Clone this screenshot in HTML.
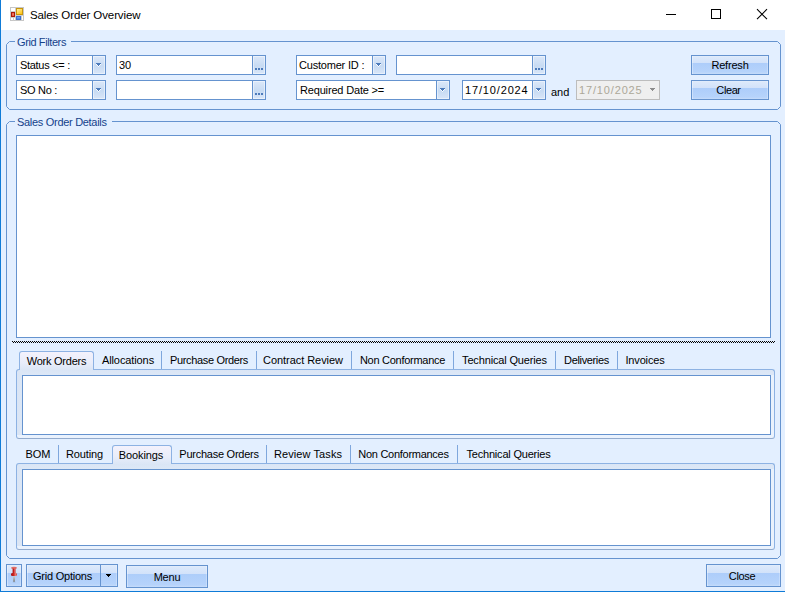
<!DOCTYPE html>
<html><head><meta charset="utf-8"><title>Sales Order Overview</title><style>
html,body{margin:0;padding:0;background:#E3EFFF;}
body{width:785px;height:592px;position:relative;overflow:hidden;font-family:"Liberation Sans",sans-serif;}
div,span.t,svg{position:absolute;box-sizing:border-box;}
span.t{font-size:11px;line-height:14px;white-space:pre;color:#000;}
span.c{text-align:center;}
</style></head>
<body>
<div style="left:0px;top:0px;width:785px;height:30px;background:#fff"></div>
<div style="left:0px;top:0px;width:1px;height:592px;background:#0F7BD7"></div>
<div style="left:0px;top:591px;width:785px;height:1px;background:#0F7BD7"></div>
<svg style="left:9px;top:6px" width="16" height="16" viewBox="0 0 16 16">
<defs><linearGradient id="gy" x1="0" y1="0" x2="0.6" y2="1"><stop offset="0" stop-color="#FFF3B0"/><stop offset="1" stop-color="#FFC61A"/></linearGradient>
<linearGradient id="gb" x1="0" y1="0" x2="0" y2="1"><stop offset="0" stop-color="#7FB0F5"/><stop offset="1" stop-color="#3F78DC"/></linearGradient></defs>
<rect x="1.5" y="1.5" width="13" height="13" fill="#fff" stroke="#C6C6C6"/>
<path d="M6.5 1.5v13M1.5 5.5h5M1.5 11.5h5M6.5 9.5h8M4.5 11.5v3M12.5 9.5v5" stroke="#CDCDCD" fill="none"/>
<rect x="7.5" y="2.5" width="6" height="6" fill="url(#gy)" stroke="#C8960C"/>
<rect x="2.5" y="6.5" width="3" height="4" fill="#E8503A" stroke="#A81A08"/>
<rect x="3.6" y="7.4" width="0.9" height="2" fill="#F6A090"/>
<rect x="7.5" y="10.5" width="4" height="3" fill="url(#gb)" stroke="#3A6FD0"/>
</svg>
<span class="t" style="left:30px;top:8px;font-size:11.5px;letter-spacing:-0.1px;color:#000;">Sales Order Overview</span>
<svg style="left:660px;top:0px" width="125" height="30" viewBox="0 0 125 30" shape-rendering="crispEdges">
<path d="M6 14.5h10" stroke="#000" fill="none"/>
<rect x="51.5" y="9.5" width="9" height="9" stroke="#000" fill="none"/>
</svg>
<svg style="left:750px;top:0px" width="30" height="30" viewBox="0 0 30 30">
<path d="M7 9.2l10 10M17 9.2l-10 10" stroke="#000" stroke-width="1.1" fill="none"/>
</svg>
<svg style="left:0;top:0" width="785" height="592" viewBox="0 0 785 592"><path d="M15 41.5H9.5L6.5 44.5V106.5L9.5 109.5H777.5L780.5 106.5V44.5L777.5 41.5H71" stroke="#6593CF" fill="none"/><path d="M15 121.5H9.5L6.5 124.5V555.5L9.5 558.5H777.5L780.5 555.5V124.5L777.5 121.5H112" stroke="#6593CF" fill="none"/></svg>
<span class="t" style="left:17px;top:35px;font-size:11px;letter-spacing:-0.4px;color:#15428B;">Grid Filters</span>
<span class="t" style="left:17px;top:115px;font-size:11px;letter-spacing:-0.3px;color:#15428B;">Sales Order Details</span>
<div style="left:16px;top:55px;width:90px;height:20px;background:#fff;border:1px solid #6593CF"></div>
<div style="left:92px;top:55px;width:14px;height:20px;border:1px solid #6593CF;background:linear-gradient(#DCE8F9,#C7DBF3 55%,#D9E6F8);box-shadow:inset 0 0 0 1px rgba(255,255,255,.45)"></div>
<svg style="left:96px;top:63px" width="5" height="5" viewBox="0 0 5 5" shape-rendering="crispEdges"><path d="M0 1h5v1h-1v1h-1v1h-1v-1h-1v-1h-1z" fill="#fff" opacity=".9"/><path d="M0 0h5v1h-1v1h-1v1h-1v-1h-1v-1h-1z" fill="#4D7BBB"/></svg>
<span class="t" style="left:20px;top:58px;font-size:11px;letter-spacing:-0.3px;color:#000;">Status &lt;= :</span>
<div style="left:16px;top:80px;width:90px;height:20px;background:#fff;border:1px solid #6593CF"></div>
<div style="left:92px;top:80px;width:14px;height:20px;border:1px solid #6593CF;background:linear-gradient(#DCE8F9,#C7DBF3 55%,#D9E6F8);box-shadow:inset 0 0 0 1px rgba(255,255,255,.45)"></div>
<svg style="left:96px;top:88px" width="5" height="5" viewBox="0 0 5 5" shape-rendering="crispEdges"><path d="M0 1h5v1h-1v1h-1v1h-1v-1h-1v-1h-1z" fill="#fff" opacity=".9"/><path d="M0 0h5v1h-1v1h-1v1h-1v-1h-1v-1h-1z" fill="#4D7BBB"/></svg>
<span class="t" style="left:20px;top:83px;font-size:11px;letter-spacing:-0.3px;color:#000;">SO No :</span>
<div style="left:116px;top:55px;width:150px;height:20px;background:#fff;border:1px solid #6593CF"></div>
<div style="left:252px;top:55px;width:14px;height:20px;border:1px solid #6593CF;background:linear-gradient(#DCE8F9,#C7DBF3 55%,#D9E6F8);box-shadow:inset 0 0 0 1px rgba(255,255,255,.45)"></div>
<div style="left:255px;top:68px;width:2px;height:2px;background:#4D7BBB"></div>
<div style="left:258px;top:68px;width:2px;height:2px;background:#4D7BBB"></div>
<div style="left:261px;top:68px;width:2px;height:2px;background:#4D7BBB"></div>
<span class="t" style="left:119px;top:58px;font-size:11px;letter-spacing:0px;color:#000;">30</span>
<div style="left:116px;top:80px;width:150px;height:20px;background:#fff;border:1px solid #6593CF"></div>
<div style="left:252px;top:80px;width:14px;height:20px;border:1px solid #6593CF;background:linear-gradient(#DCE8F9,#C7DBF3 55%,#D9E6F8);box-shadow:inset 0 0 0 1px rgba(255,255,255,.45)"></div>
<div style="left:255px;top:93px;width:2px;height:2px;background:#4D7BBB"></div>
<div style="left:258px;top:93px;width:2px;height:2px;background:#4D7BBB"></div>
<div style="left:261px;top:93px;width:2px;height:2px;background:#4D7BBB"></div>
<div style="left:296px;top:55px;width:90px;height:20px;background:#fff;border:1px solid #6593CF"></div>
<div style="left:372px;top:55px;width:14px;height:20px;border:1px solid #6593CF;background:linear-gradient(#DCE8F9,#C7DBF3 55%,#D9E6F8);box-shadow:inset 0 0 0 1px rgba(255,255,255,.45)"></div>
<svg style="left:376px;top:63px" width="5" height="5" viewBox="0 0 5 5" shape-rendering="crispEdges"><path d="M0 1h5v1h-1v1h-1v1h-1v-1h-1v-1h-1z" fill="#fff" opacity=".9"/><path d="M0 0h5v1h-1v1h-1v1h-1v-1h-1v-1h-1z" fill="#4D7BBB"/></svg>
<span class="t" style="left:299px;top:58px;font-size:11px;letter-spacing:-0.2px;color:#000;">Customer ID :</span>
<div style="left:296px;top:80px;width:154px;height:20px;background:#fff;border:1px solid #6593CF"></div>
<div style="left:436px;top:80px;width:14px;height:20px;border:1px solid #6593CF;background:linear-gradient(#DCE8F9,#C7DBF3 55%,#D9E6F8);box-shadow:inset 0 0 0 1px rgba(255,255,255,.45)"></div>
<svg style="left:440px;top:88px" width="5" height="5" viewBox="0 0 5 5" shape-rendering="crispEdges"><path d="M0 1h5v1h-1v1h-1v1h-1v-1h-1v-1h-1z" fill="#fff" opacity=".9"/><path d="M0 0h5v1h-1v1h-1v1h-1v-1h-1v-1h-1z" fill="#4D7BBB"/></svg>
<span class="t" style="left:300px;top:83px;font-size:11px;letter-spacing:-0.17px;color:#000;">Required Date &gt;=</span>
<div style="left:396px;top:55px;width:150px;height:20px;background:#fff;border:1px solid #6593CF"></div>
<div style="left:532px;top:55px;width:14px;height:20px;border:1px solid #6593CF;background:linear-gradient(#DCE8F9,#C7DBF3 55%,#D9E6F8);box-shadow:inset 0 0 0 1px rgba(255,255,255,.45)"></div>
<div style="left:535px;top:68px;width:2px;height:2px;background:#4D7BBB"></div>
<div style="left:538px;top:68px;width:2px;height:2px;background:#4D7BBB"></div>
<div style="left:541px;top:68px;width:2px;height:2px;background:#4D7BBB"></div>
<div style="left:462px;top:80px;width:84px;height:20px;background:#fff;border:1px solid #6593CF"></div>
<div style="left:532px;top:80px;width:14px;height:20px;border:1px solid #6593CF;background:linear-gradient(#DCE8F9,#C7DBF3 55%,#D9E6F8);box-shadow:inset 0 0 0 1px rgba(255,255,255,.45)"></div>
<svg style="left:536px;top:88px" width="5" height="5" viewBox="0 0 5 5" shape-rendering="crispEdges"><path d="M0 1h5v1h-1v1h-1v1h-1v-1h-1v-1h-1z" fill="#fff" opacity=".9"/><path d="M0 0h5v1h-1v1h-1v1h-1v-1h-1v-1h-1z" fill="#4D7BBB"/></svg>
<span class="t" style="left:465px;top:83px;font-size:11px;letter-spacing:0.85px;color:#000;">17/10/2024</span>
<span class="t" style="left:551px;top:85px;font-size:11px;letter-spacing:0px;color:#000;">and</span>
<div style="left:576px;top:80px;width:84px;height:20px;background:#EFEFEF;border:1px solid #BDBDBD"></div>
<svg style="left:650px;top:88px" width="5" height="5" viewBox="0 0 5 5" shape-rendering="crispEdges"><path d="M0 0h5v1h-1v1h-1v1h-1v-1h-1v-1h-1z" fill="#8C8C8C"/></svg>
<span class="t" style="left:579px;top:83px;font-size:11px;letter-spacing:0.85px;color:#ACA899;">17/10/2025</span>
<div class="btn" style="left:691px;top:55px;width:78px;height:20px;border:1px solid #6593CF;background:linear-gradient(#E4EEFC 0px,#DCE9FB 1px,#D2E2FA 7px,#ADCDFA 7px,#B6D3FB 16px,#C6DCFA 18px);box-shadow:inset 1px 0 rgba(255,255,255,.35),inset -1px 0 rgba(255,255,255,.25)"></div>
<span class="t c" style="left:691px;width:78px;top:58px;letter-spacing:-0.2px">Refresh</span>
<div class="btn" style="left:691px;top:80px;width:78px;height:20px;border:1px solid #6593CF;background:linear-gradient(#E4EEFC 0px,#DCE9FB 1px,#D2E2FA 7px,#ADCDFA 7px,#B6D3FB 16px,#C6DCFA 18px);box-shadow:inset 1px 0 rgba(255,255,255,.35),inset -1px 0 rgba(255,255,255,.25)"></div>
<span class="t c" style="left:689.5px;width:78px;top:83px;letter-spacing:-0.4px">Clear</span>
<div style="left:16px;top:135px;width:755px;height:203px;background:#fff;border:1px solid #6593CF"></div>
<div style="left:12px;top:341px;width:763px;height:2px;background:conic-gradient(transparent 25%,#000 0 50%,transparent 0 75%,#000 0) 0 0/2px 2px"></div>
<div style="left:16px;top:369px;width:759px;height:70px;border:1px solid #8DB2E3;border-bottom-color:#93ABCD;border-radius:3px;background:linear-gradient(90deg,#DAE5F5 0,#DCE7F6 100%) 0 0/5px calc(100% - 3px) no-repeat,linear-gradient(#DAE5F5 0,#DDE8F7 5px,#E9F2FD 5px,#EAF2FD 100%)"></div>
<div style="left:22px;top:375px;width:749px;height:60px;background:#fff;border:1px solid #6593CF"></div>
<div style="left:19px;top:351px;width:75px;height:19px;border:1px solid #8DB2E3;border-bottom:none;border-radius:3px 3px 0 0;background:linear-gradient(#F4F2FC,#E9EDFA 60%,#DBE6F6)"></div>
<span class="t c" style="left:19px;width:75px;top:354px;letter-spacing:-0.25px">Work Orders</span>
<span class="t c" style="left:94px;width:68px;top:353px;letter-spacing:-0.1px">Allocations</span>
<div style="left:161px;top:351px;width:1px;height:18px;background:#7FA7DD"></div>
<span class="t c" style="left:161px;width:96px;top:353px;letter-spacing:-0.35px">Purchase Orders</span>
<div style="left:256px;top:351px;width:1px;height:18px;background:#7FA7DD"></div>
<span class="t c" style="left:255px;width:96px;top:353px;letter-spacing:-0.05px">Contract Review</span>
<div style="left:351px;top:351px;width:1px;height:18px;background:#7FA7DD"></div>
<span class="t c" style="left:351px;width:103px;top:353px;letter-spacing:-0.28px">Non Conformance</span>
<div style="left:453px;top:351px;width:1px;height:18px;background:#7FA7DD"></div>
<span class="t c" style="left:453px;width:103px;top:353px;letter-spacing:-0.15px">Technical Queries</span>
<div style="left:555px;top:351px;width:1px;height:18px;background:#7FA7DD"></div>
<span class="t c" style="left:555px;width:63px;top:353px;letter-spacing:-0.35px">Deliveries</span>
<div style="left:617px;top:351px;width:1px;height:18px;background:#7FA7DD"></div>
<span class="t c" style="left:617px;width:56px;top:353px;letter-spacing:-0.15px">Invoices</span>
<div style="left:16px;top:463px;width:759px;height:87px;border:1px solid #8DB2E3;border-bottom-color:#93ABCD;border-radius:3px;background:linear-gradient(90deg,#DAE5F5 0,#DCE7F6 100%) 0 0/5px calc(100% - 3px) no-repeat,linear-gradient(#DAE5F5 0,#DDE8F7 5px,#E9F2FD 5px,#EAF2FD 100%)"></div>
<div style="left:22px;top:469px;width:749px;height:77px;background:#fff;border:1px solid #6593CF"></div>
<span class="t c" style="left:17px;width:42px;top:447px;letter-spacing:-0.1px">BOM</span>
<div style="left:58px;top:445px;width:1px;height:18px;background:#7FA7DD"></div>
<span class="t c" style="left:57.5px;width:54px;top:447px;letter-spacing:-0.1px">Routing</span>
<div style="left:112px;top:445px;width:60px;height:19px;border:1px solid #8DB2E3;border-bottom:none;border-radius:3px 3px 0 0;background:linear-gradient(#F4F2FC,#E9EDFA 60%,#DBE6F6)"></div>
<span class="t c" style="left:111px;width:60px;top:448px;letter-spacing:-0.1px">Bookings</span>
<span class="t c" style="left:171.5px;width:95px;top:447px;letter-spacing:-0.25px">Purchase Orders</span>
<div style="left:266px;top:445px;width:1px;height:18px;background:#7FA7DD"></div>
<span class="t c" style="left:265.5px;width:85px;top:447px;letter-spacing:0.1px">Review Tasks</span>
<div style="left:350px;top:445px;width:1px;height:18px;background:#7FA7DD"></div>
<span class="t c" style="left:349.5px;width:108px;top:447px;letter-spacing:-0.28px">Non Conformances</span>
<div style="left:457px;top:445px;width:1px;height:18px;background:#7FA7DD"></div>
<span class="t c" style="left:457px;width:103px;top:447px;letter-spacing:-0.2px">Technical Queries</span>
<div class="btn" style="left:6px;top:564px;width:16px;height:23px;border:1px solid #6593CF;background:linear-gradient(#E4EEFC 0px,#DCE9FB 1px,#D2E2FA 8px,#ADCDFA 8px,#B6D3FB 19px,#C6DCFA 21px);box-shadow:inset 1px 0 rgba(255,255,255,.35),inset -1px 0 rgba(255,255,255,.25)"></div>
<svg style="left:9px;top:566px" width="10" height="17" viewBox="0 0 10 17">
<defs><linearGradient id="pr" x1="0" y1="0" x2="1" y2="0"><stop offset="0" stop-color="#A51010"/><stop offset=".45" stop-color="#CC2424"/><stop offset=".8" stop-color="#EC857C"/><stop offset="1" stop-color="#C83232"/></linearGradient>
<linearGradient id="pn" x1="0" y1="0" x2="0" y2="1"><stop offset="0" stop-color="#D0D0D0"/><stop offset="1" stop-color="#7C7C7C"/></linearGradient></defs>
<rect x="4.2" y="10" width="1.7" height="5.8" fill="url(#pn)"/>
<ellipse cx="5.2" cy="16" rx="1.6" ry=".6" fill="#7090B8" opacity=".35"/>
<ellipse cx="5" cy="2" rx="3" ry="1.15" fill="#DF6C64"/>
<rect x="3.6" y="2.6" width="3" height="4.8" fill="url(#pr)"/>
<path d="M2 8.2Q2 7 3.5 7h3Q8 7 8 8.2V9Q8 10 6.5 10h-3Q2 10 2 9z" fill="url(#pr)"/>
</svg>
<div class="btn" style="left:26px;top:564px;width:92px;height:23px;border:1px solid #6593CF;background:linear-gradient(#E4EEFC 0px,#DCE9FB 1px,#D2E2FA 8px,#ADCDFA 8px,#B6D3FB 19px,#C6DCFA 21px);box-shadow:inset 1px 0 rgba(255,255,255,.35),inset -1px 0 rgba(255,255,255,.25)"></div>
<div style="left:100px;top:565px;width:1px;height:21px;background:#6593CF"></div>
<span class="t c" style="left:25px;width:75px;top:569px;letter-spacing:-0.22px">Grid Options</span>
<svg style="left:106px;top:574px" width="5" height="5" viewBox="0 0 5 5" shape-rendering="crispEdges"><path d="M0 0h5v1h-1v1h-1v1h-1v-1h-1v-1h-1z" fill="#000"/></svg>
<div class="btn" style="left:126px;top:565px;width:82px;height:23px;border:1px solid #6593CF;background:linear-gradient(#E4EEFC 0px,#DCE9FB 1px,#D2E2FA 8px,#ADCDFA 8px,#B6D3FB 19px,#C6DCFA 21px);box-shadow:inset 1px 0 rgba(255,255,255,.35),inset -1px 0 rgba(255,255,255,.25)"></div>
<span class="t c" style="left:126px;width:82px;top:570px;letter-spacing:-0.2px">Menu</span>
<div class="btn" style="left:706px;top:564px;width:75px;height:23px;border:1px solid #6593CF;background:linear-gradient(#E4EEFC 0px,#DCE9FB 1px,#D2E2FA 8px,#ADCDFA 8px,#B6D3FB 19px,#C6DCFA 21px);box-shadow:inset 1px 0 rgba(255,255,255,.35),inset -1px 0 rgba(255,255,255,.25)"></div>
<span class="t c" style="left:704.5px;width:75px;top:569px;letter-spacing:-0.35px">Close</span>
</body></html>
